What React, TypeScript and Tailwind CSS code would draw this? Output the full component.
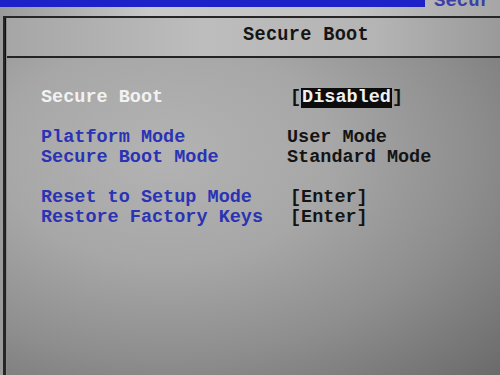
const rows: { label: string; value: string; kind: "sel" | "info" | "act" | "gap" }[] = [
  { label: "Secure Boot", value: "Disabled", kind: "sel" },
  { label: "", value: "", kind: "gap" },
  { label: "Platform Mode", value: "User Mode", kind: "info" },
  { label: "Secure Boot Mode", value: "Standard Mode", kind: "info" },
  { label: "", value: "", kind: "gap" },
  { label: "Reset to Setup Mode", value: "[Enter]", kind: "act" },
  { label: "Restore Factory Keys", value: "[Enter]", kind: "act" },
];

const mono = "font-['Liberation_Mono','DejaVu_Sans_Mono',monospace] font-bold";

export default function App() {
  return (
    <div className={`w-[500px] h-[375px] overflow-hidden flex flex-col bg-[linear-gradient(90deg,#9a9a9a_0%,#c9c9c9_30%,#c4c4c4_70%,#a6a6a6_100%)] ${mono}`}>
      {/* top tab strip */}
      <div className="h-[16px] flex items-start shrink-0">
        <div className="w-[425px] h-[7px] bg-[#1c22c8]" />
        <div className="ml-[9px] -mt-[7px] text-[19px] leading-[16px] text-[#3a40a8] whitespace-nowrap">
          Secur
        </div>
      </div>

      {/* frame */}
      <div className="flex-1 flex ml-[3px] border-l-[2px] border-t-[2px] border-[#262626] bg-[linear-gradient(180deg,#101010_0%,#262626_100%)]">
        <div className="flex-1 flex flex-col ml-[1px] border-l border-[#8a8a8a]">
          {/* header */}
          <div className="h-[40px] shrink-0 border-b-[2px] border-[#232323] bg-[linear-gradient(90deg,#a6a6a6_0%,#bdbdbd_40%,#b4b4b4_75%,#9a9a9a_100%)] flex items-center pl-[236px] pb-[3px]">
            <span className="text-[18.6px] leading-[20px] text-[#151515] scale-y-110 tracking-[0.3px] whitespace-pre">
              Secure Boot
            </span>
          </div>

          {/* body */}
          <div className="flex-1 pt-[30px] bg-[radial-gradient(ellipse_at_32%_30%,#b3b3b3_0%,#a7a7a7_35%,#8e8e8e_65%,#6a6a6a_100%)]">
            {rows.map((r, i) => (
              <div key={i} className="h-[20px] flex items-center text-[18.5px] leading-[20px] whitespace-pre">
                <div className={`w-[280px] shrink-0 pl-[34px] ${r.kind === "sel" ? "text-[#f2f2f2]" : "text-[#2a33b4]"}`}>
                  {r.label}
                </div>
                {r.kind === "sel" ? (
                  <div className="flex items-center text-[#111] pl-[3px]">
                    <span>[</span>
                    <span className="bg-[#0c0c0c] text-[#f0f0f0] px-[1px]">{r.value}</span>
                    <span>]</span>
                  </div>
                ) : (
                  <div className={`text-[#141414] ${r.kind === "act" ? "pl-[3px]" : ""}`}>{r.value}</div>
                )}
              </div>
            ))}
          </div>
        </div>
      </div>
    </div>
  );
}
